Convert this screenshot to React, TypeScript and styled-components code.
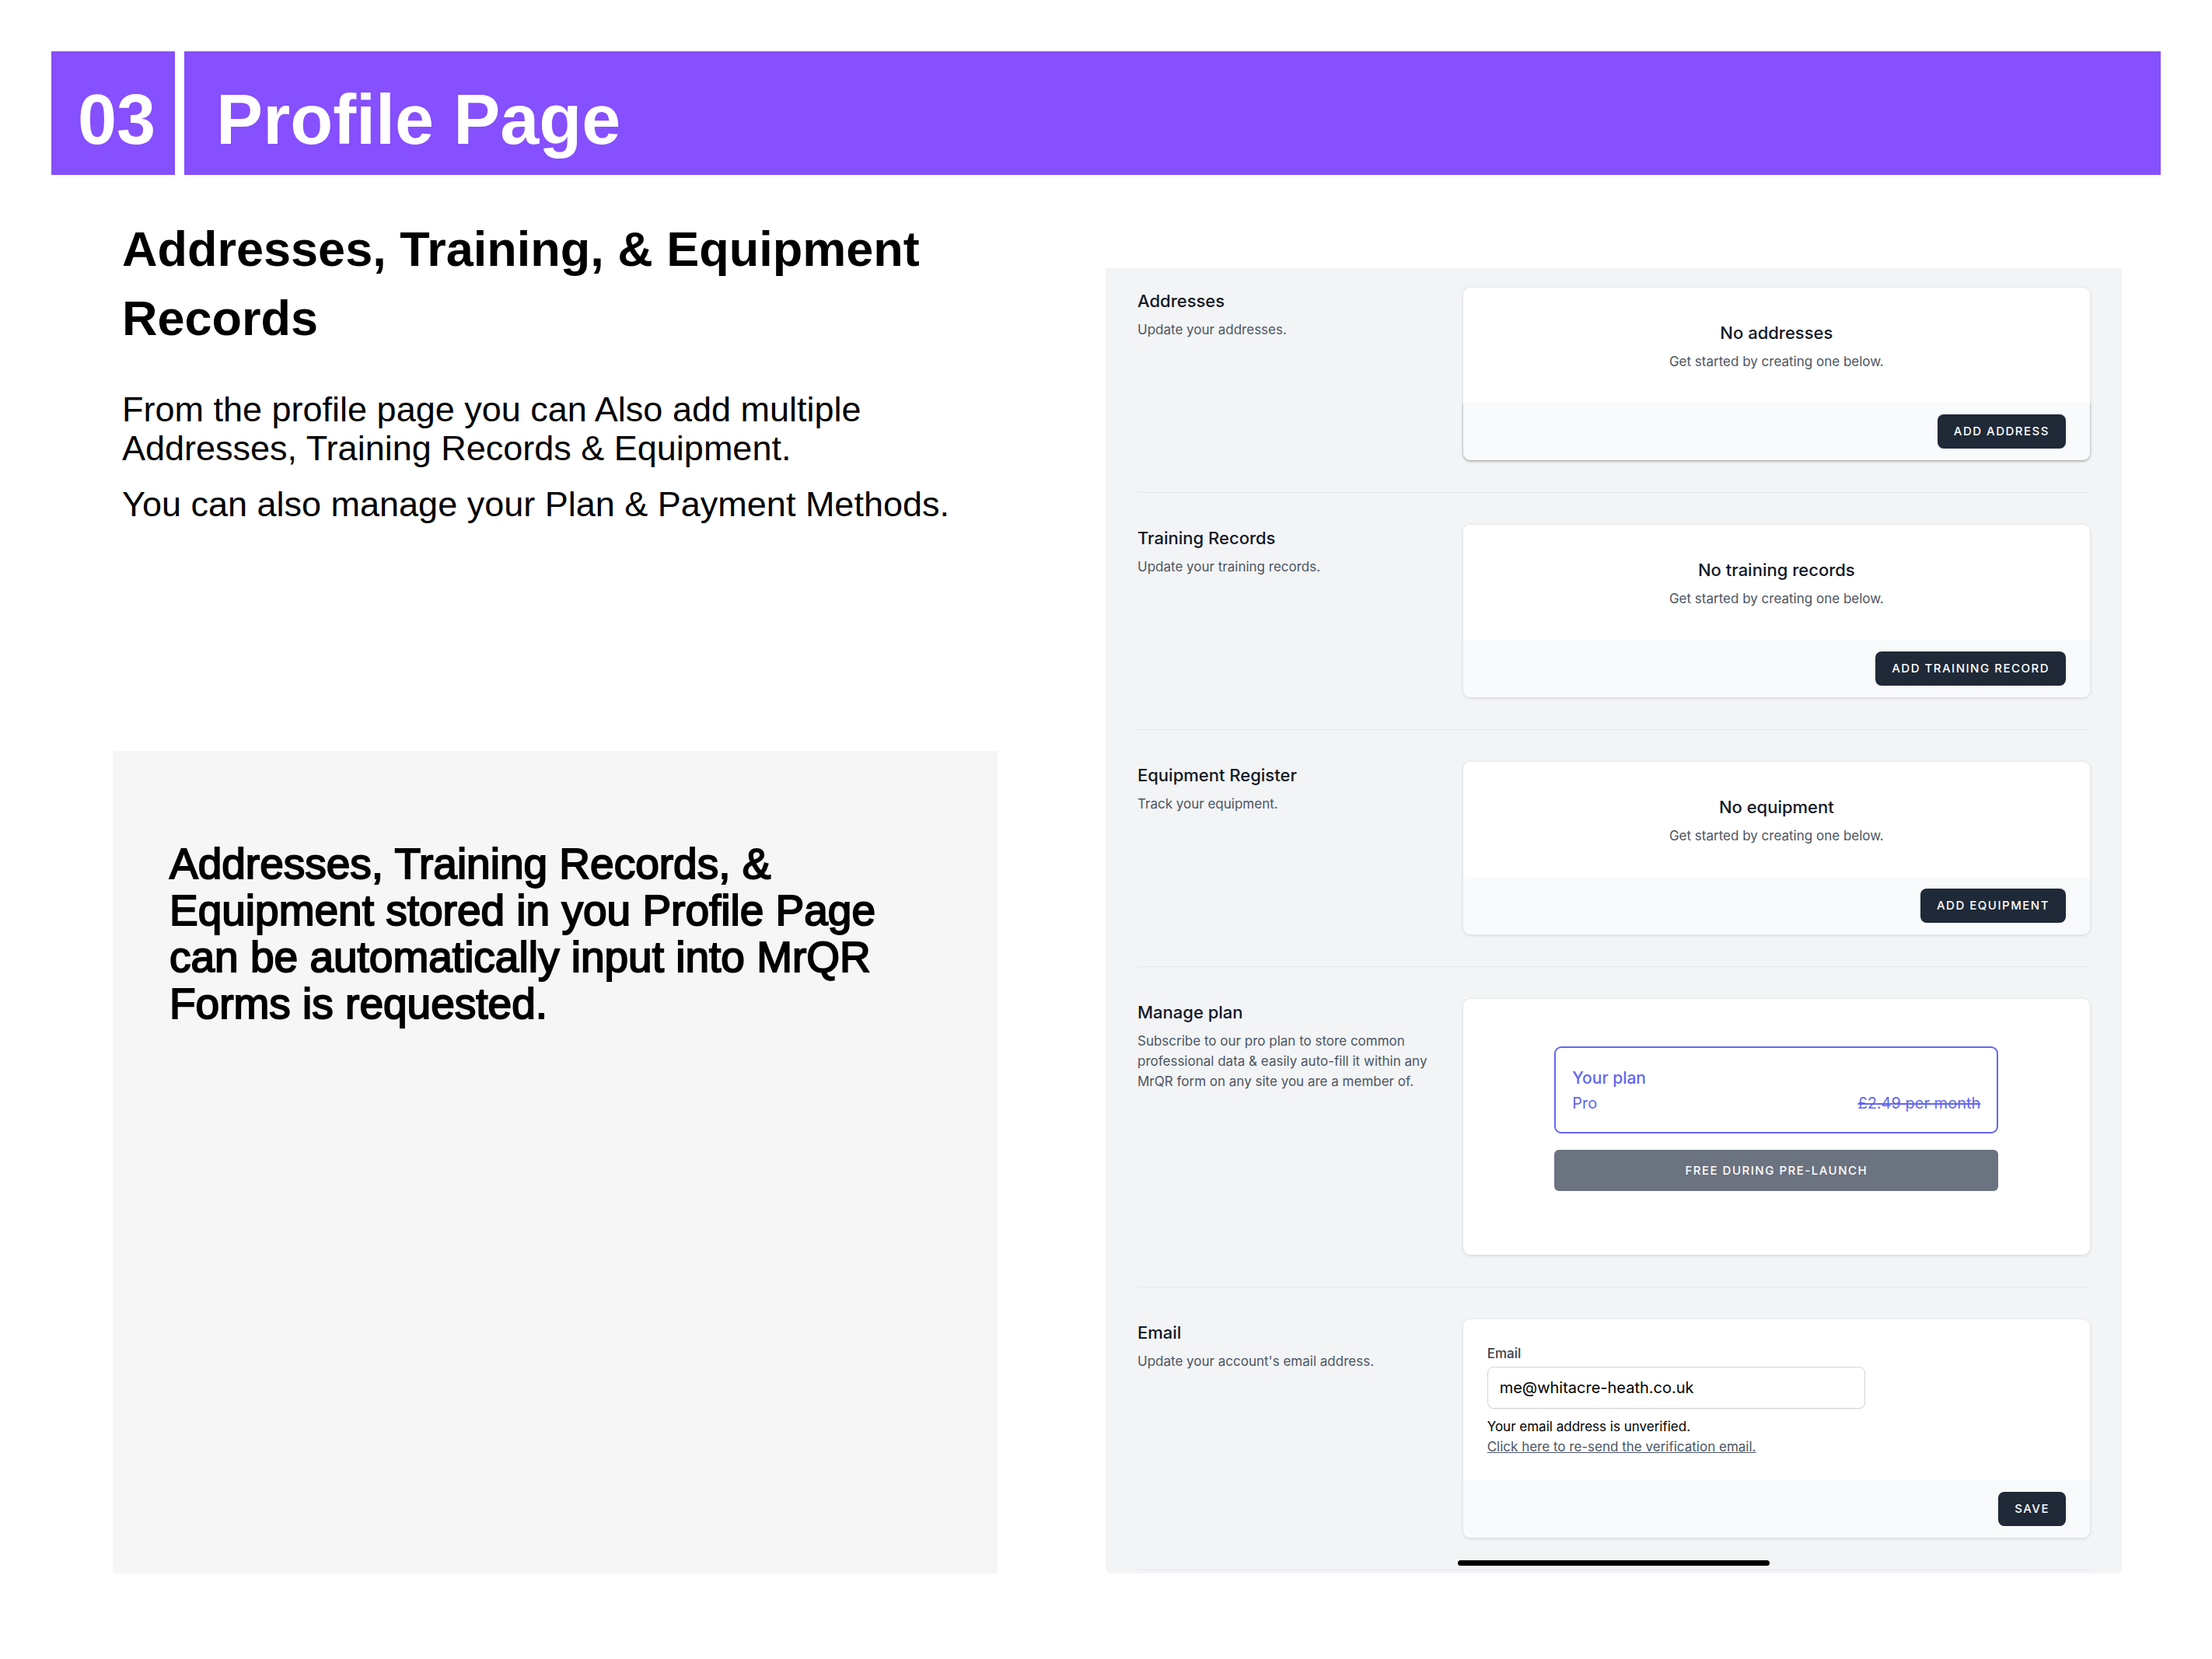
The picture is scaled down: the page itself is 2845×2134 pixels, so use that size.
import React from "react";
import styled, { createGlobalStyle } from "styled-components";

const GlobalStyle = createGlobalStyle`
  *, *::before, *::after { box-sizing: border-box; }
  body { margin: 0; background: #fff; color: #000; }
  h1, h2, h3, p { margin: 0; }
`;

const slideFont = `"Liberation Sans", Arial, Helvetica, sans-serif`;
const appFont = `Inter, "Noto Sans", sans-serif`;

const Slide = styled.div`
  padding: 66px 66px 110px;
  font-family: ${slideFont};
`;

const Banner = styled.header`
  display: flex;
  gap: 12px;
  color: #fff;
  font-size: 90px;
  font-weight: 700;
  line-height: 141px;
`;

const BannerNumber = styled.div`
  flex: none;
  padding: 18px 25px 0 34px;
  background: #864fff;
`;

const BannerTitle = styled.h1`
  flex: 1;
  padding: 18px 41px 0;
  background: #864fff;
  font: inherit;
`;

const Columns = styled.main`
  display: grid;
  grid-template-columns: 1138fr 1307fr;
  gap: 139px;
  padding: 0 50px 0 79px;
`;

const Story = styled.section`
  display: flex;
  flex-direction: column;
  padding-top: 51px;
`;

const Intro = styled.div`
  padding-left: 12px;
`;

const IntroTitle = styled.h2`
  margin-bottom: 48px;
  font-size: 63px;
  font-weight: 700;
  line-height: 89px;
`;

const IntroText = styled.p`
  font-size: 45px;
  line-height: 50px;

  & + & { margin-top: 22px; }
`;

const Callout = styled.aside`
  flex: 1;
  margin-top: 292px;
  padding: 115px 100px 113px 73px;
  background: #f6f6f6;
  font-size: 55px;
  line-height: 60px;
  -webkit-text-stroke: 2px #000;
`;

const Screen = styled.section`
  position: relative;
  margin-top: 120px;
  padding: 25px 41px 4px;
  border-radius: 0 0 8px 8px;
  background: #f3f4f6;
  color: #111827;
  font-family: ${appFont};
  font-size: 17px;
  line-height: 26px;
`;

const Row = styled.section`
  display: grid;
  grid-template-columns: repeat(3, 1fr);
  gap: 31px;
  padding-bottom: 41px;
  border-bottom: 1px solid #e5e7eb;

  & + & { padding-top: 41px; }
`;

const Title = styled.h3`
  margin-bottom: 6px;
  font-size: 22px;
  font-weight: 500;
  line-height: 35px;
`;

const Note = styled.p`
  color: #4b5563;
`;

const Card = styled.div`
  grid-column: span 2;
  border-radius: 9px;
  background: #fff;
  box-shadow: 0 1px 4px rgba(0, 0, 0, 0.14);
`;

const EmptyBody = styled.div`
  padding: 41px 31px 40px;
  text-align: center;
`;

const CardFooter = styled.div<{ $raised?: boolean }>`
  display: flex;
  justify-content: flex-end;
  padding: 15px 31px;
  border-radius: 0 0 9px 9px;
  background: #f9fafc;
  box-shadow: ${(p) => (p.$raised ? "0 1px 3px rgba(0, 0, 0, 0.3)" : "none")};
  clip-path: inset(0 -6px -6px -6px);
`;

const Button = styled.button`
  height: 44px;
  padding: 0 21px;
  border: 0;
  border-radius: 8px;
  background: #1f2937;
  color: #fff;
  font-family: inherit;
  font-size: 15px;
  font-weight: 500;
  line-height: 20px;
  letter-spacing: 0.1em;
  text-transform: uppercase;
`;

const WideButton = styled(Button)`
  width: 100%;
  height: 53px;
  margin-top: 21px;
  border-radius: 6px;
  background: #6b7280;
`;

const PlanBody = styled.div`
  max-width: 571px;
  margin: 0 auto;
  padding: 61px 0 82px;
`;

const PlanBox = styled.div`
  padding: 21px;
  border: 2px solid #6366f1;
  border-radius: 9px;
  color: #6366f1;
`;

const PlanTitle = styled.h3`
  font-size: 21px;
  font-weight: 500;
  line-height: 35px;
`;

const PlanLine = styled.div`
  display: flex;
  justify-content: space-between;
  font-size: 20px;
  line-height: 31px;
`;

const FormBody = styled.div`
  display: grid;
  grid-template-columns: repeat(6, 1fr);
  column-gap: 31px;
  padding: 31px 31px 30px;
`;

const Field = styled.div`
  grid-column: span 4;
  display: flex;
  flex-direction: column;
  align-items: flex-start;
`;

const Label = styled.label`
  margin-bottom: 4px;
  color: #374151;
  font-weight: 500;
`;

const TextInput = styled.input`
  width: 100%;
  height: 54px;
  margin-bottom: 10px;
  padding: 0 15px;
  border: 1px solid #d1d5db;
  border-radius: 8px;
  background: #fff;
  box-shadow: 0 1px 2px rgba(0, 0, 0, 0.06);
  color: #000;
  font-family: inherit;
  font-size: 20px;
`;

const Status = styled.p`
  color: #000;
`;

const ResendLink = styled.a`
  color: #4b5563;
  text-decoration: underline;
`;

const HomeIndicator = styled.div`
  position: absolute;
  bottom: 10px;
  left: 453px;
  width: 401px;
  height: 7px;
  border-radius: 4px;
  background: #000;
`;

const records = [
  { title: "Addresses", note: "Update your addresses.", empty: "No addresses", action: "Add address" },
  { title: "Training Records", note: "Update your training records.", empty: "No training records", action: "Add training record" },
  { title: "Equipment Register", note: "Track your equipment.", empty: "No equipment", action: "Add equipment" },
];

export default function App() {
  return (
    <>
      <GlobalStyle />
      <Slide>
        <Banner>
          <BannerNumber>03</BannerNumber>
          <BannerTitle>Profile Page</BannerTitle>
        </Banner>
        <Columns>
          <Story>
            <Intro>
              <IntroTitle>Addresses, Training, &amp; Equipment Records</IntroTitle>
              <IntroText>
                From the profile page you can Also add multiple Addresses, Training Records &amp; Equipment.
              </IntroText>
              <IntroText>You can also manage your Plan &amp; Payment Methods.</IntroText>
            </Intro>
            <Callout>
              <p>
                Addresses, Training Records, &amp; Equipment stored in you Profile Page can be automatically input
                into MrQR Forms is requested.
              </p>
            </Callout>
          </Story>

          <Screen>
            {records.map((record, index) => (
              <Row key={record.title}>
                <div>
                  <Title>{record.title}</Title>
                  <Note>{record.note}</Note>
                </div>
                <Card>
                  <EmptyBody>
                    <Title>{record.empty}</Title>
                    <Note>Get started by creating one below.</Note>
                  </EmptyBody>
                  <CardFooter $raised={index === 0}>
                    <Button type="button">{record.action}</Button>
                  </CardFooter>
                </Card>
              </Row>
            ))}

            <Row>
              <div>
                <Title>Manage plan</Title>
                <Note>
                  Subscribe to our pro plan to store common professional data &amp; easily auto-fill it within any
                  MrQR form on any site you are a member of.
                </Note>
              </div>
              <Card>
                <PlanBody>
                  <PlanBox>
                    <PlanTitle>Your plan</PlanTitle>
                    <PlanLine>
                      <span>Pro</span>
                      <s>£2.49 per month</s>
                    </PlanLine>
                  </PlanBox>
                  <WideButton type="button">Free during pre-launch</WideButton>
                </PlanBody>
              </Card>
            </Row>

            <Row>
              <div>
                <Title>Email</Title>
                <Note>Update your account's email address.</Note>
              </div>
              <Card>
                <FormBody>
                  <Field>
                    <Label htmlFor="email">Email</Label>
                    <TextInput id="email" type="email" defaultValue="me@whitacre-heath.co.uk" />
                    <Status>Your email address is unverified.</Status>
                    <ResendLink href="#resend">Click here to re-send the verification email.</ResendLink>
                  </Field>
                </FormBody>
                <CardFooter>
                  <Button type="button">Save</Button>
                </CardFooter>
              </Card>
            </Row>
            <HomeIndicator />
          </Screen>
        </Columns>
      </Slide>
    </>
  );
}
